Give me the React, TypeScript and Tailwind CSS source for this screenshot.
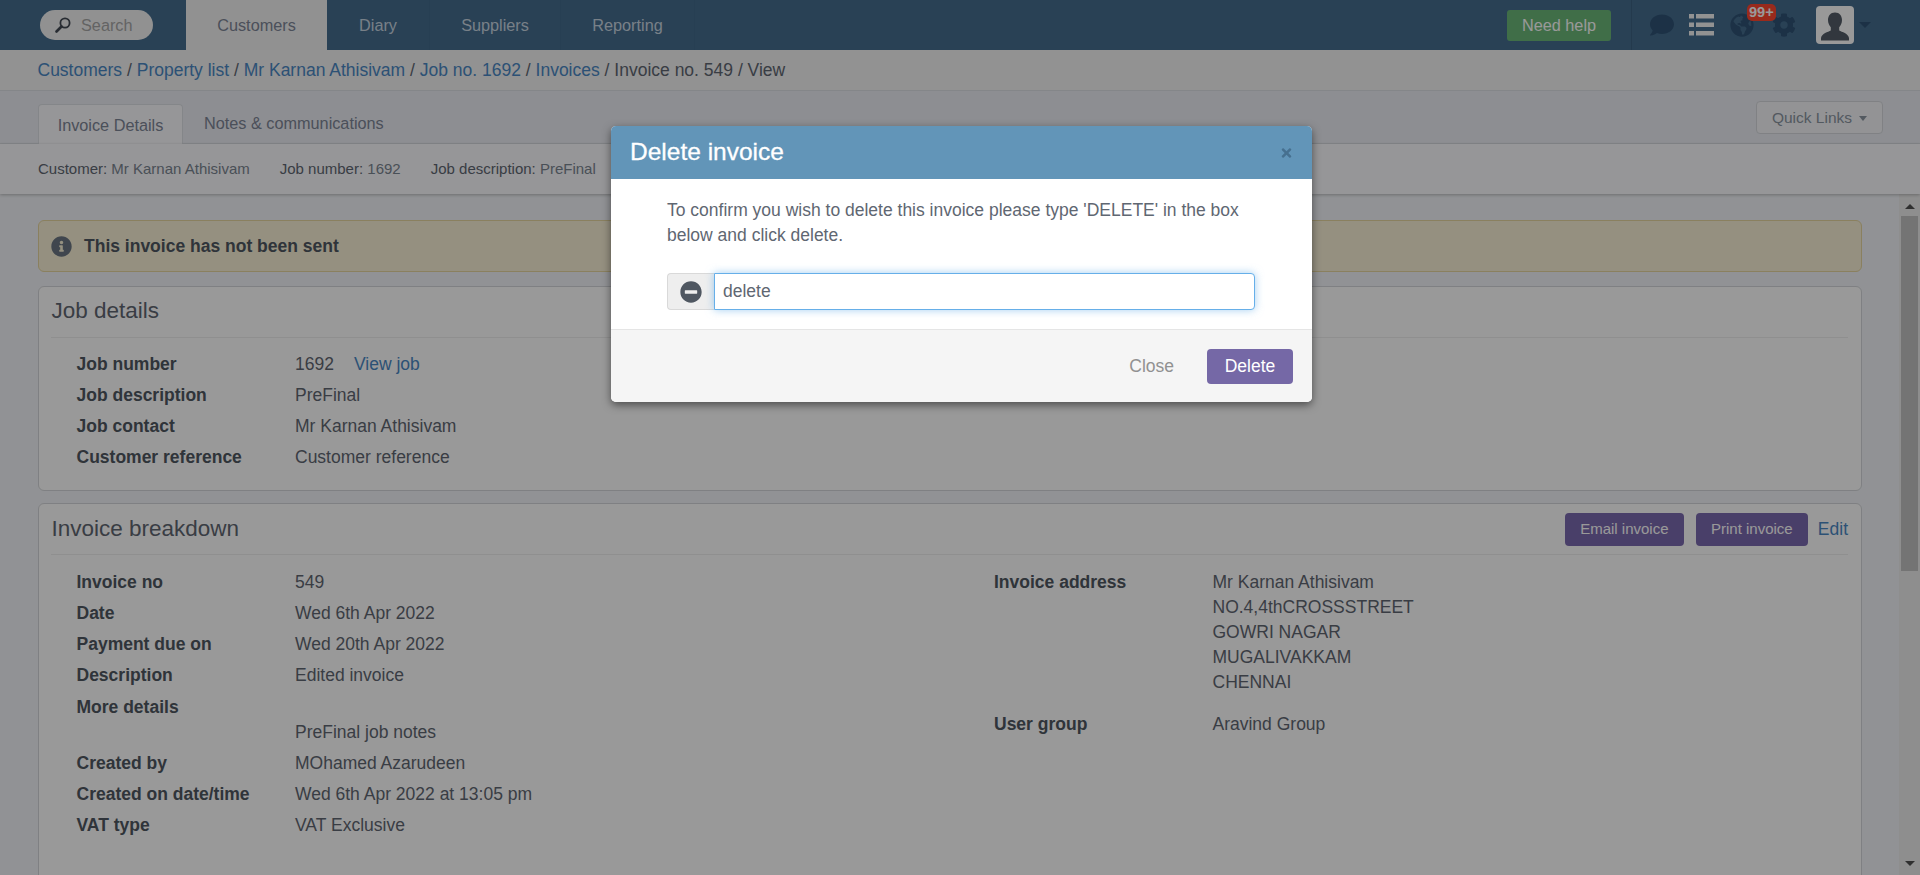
import React from 'react';
import { FaComment, FaGlobeAmericas, FaCog, FaInfoCircle, FaMinusCircle, FaTimes } from 'react-icons/fa';

const Row = ({ label, value, tall }: { label?: string; value?: React.ReactNode; tall?: boolean }) => (
  <div className={`flex leading-[25px] ${tall ? '-mt-[3px] h-[28px]' : 'h-[31px] pt-[3px]'}`}>
    <div className="w-[218.500px] shrink-0 font-bold text-[#4f5761]">{label}</div>
    <div className="text-[#5f6772]">{value}</div>
  </div>
);

const App = () => {
  return (
    <div className="relative h-[875px] w-[1920px] overflow-hidden bg-white text-[17.5px] text-[#5f6772] font-['Liberation_Sans',Arial,sans-serif]">
      {/* Top nav */}
      <header className="flex h-[50px] items-center bg-[#456d8e]">
        <div className="flex w-[186px] shrink-0 pl-[40px]">
          <div className="flex h-[30px] w-[113px] items-center gap-[10px] rounded-full bg-[#f2f2f2] pl-[15px] text-[16.25px] text-[#a6a6a6]">
            <svg viewBox="0 0 16 16" className="h-[16px] w-[16px]" fill="none" stroke="#434a54">
              <circle cx="10" cy="6" r="4.6" strokeWidth="1.800" />
              <path d="M6.500 9.500L1.500 14.500" strokeWidth="2.600" strokeLinecap="round" />
            </svg>
            Search
          </div>
        </div>
        <nav className="flex h-full text-[16.25px]">
          <div className="flex w-[141px] items-center justify-center bg-[#f2f2f2] text-[#7d8596]">Customers</div>
          <div className="flex w-[103px] items-center justify-center border-r border-[#42698a] text-[#c9d6e2]">Diary</div>
          <div className="flex w-[131px] items-center justify-center border-r border-[#42698a] text-[#c9d6e2]">Suppliers</div>
          <div className="flex w-[134px] items-center justify-center border-r border-[#42698a] text-[#c9d6e2]">Reporting</div>
        </nav>
        <div className="ml-auto flex h-full items-center">
          <button className="flex h-[31px] w-[104px] items-center justify-center rounded-[3px] bg-[#6bb878] text-[16.25px] text-white">Need help</button>
          <div className="ml-[20px] h-full border-l border-[#3d6180]" />
          <div className="relative ml-[18px] flex items-center text-[#2f5375]">
            <FaComment className="h-[24px] w-[24px]" />
            <svg viewBox="0 0 25 22" className="ml-[15px] h-[22px] w-[25px]" fill="#f4f4f4">
              <rect x="0" y="0" width="5" height="4.500" />
              <rect x="7" y="0" width="18" height="4.500" />
              <rect x="0" y="8.500" width="5" height="4.500" />
              <rect x="7" y="8.500" width="18" height="4.500" />
              <rect x="0" y="17" width="5" height="4.500" />
              <rect x="7" y="17" width="18" height="4.500" />
            </svg>
            <FaGlobeAmericas className="ml-[16px] h-[24px] w-[24px]" />
            <FaCog className="ml-[18px] h-[24px] w-[24px]" />
            <span className="absolute left-[97px] top-[-9px] rounded-[5px] bg-[#ff4630] px-[2px] text-[14.5px] font-bold leading-[17px] text-white">99+</span>
          </div>
          <div className="ml-[20px] flex h-[38px] w-[38px] items-end justify-center overflow-hidden rounded-[4px] bg-white">
            <svg viewBox="0 0 38 38" className="h-[38px] w-[38px]" fill="#545d68">
              <path d="M19 6.500c-4.600 0-7 3.400-7 7.600 0 3 1.200 5.400 2.800 7.200v3.200c-2.600 1.400-9.300 3-9.800 7.600v2.400h28v-2.400c-.5-4.600-7.200-6.200-9.800-7.600v-3.200c1.600-1.800 2.800-4.200 2.800-7.200 0-4.200-2.400-7.600-7-7.600z" />
            </svg>
          </div>
          <div className="ml-[5px] mr-[49px] h-0 w-0 border-x-[6px] border-t-[6px] border-x-transparent border-t-[#2f5375]" />
        </div>
      </header>

      {/* Breadcrumb */}
      <div className="flex h-[41px] items-center border-b border-[#dcdfe4] bg-[#f3f3f3] pl-[37.500px] text-[#5f6772]">
        <a className="text-[#4a88c4]">Customers</a>&nbsp;/&nbsp;
        <a className="text-[#4a88c4]">Property list</a>&nbsp;/&nbsp;
        <a className="text-[#4a88c4]">Mr Karnan Athisivam</a>&nbsp;/&nbsp;
        <a className="text-[#4a88c4]">Job no. 1692</a>&nbsp;/&nbsp;
        <a className="text-[#4a88c4]">Invoices</a>&nbsp;/ Invoice no. 549 / View
      </div>

      {/* Tabs */}
      <div className="flex h-[53px] items-end justify-between border-b border-[#dcdfe4] bg-[#ebedf3] pl-[38px] pr-[37px]">
        <div className="flex items-end text-[16.25px]">
          <div className="-mb-px flex h-[40px] w-[145px] items-center justify-center rounded-t-[4px] border border-b-0 border-[#dcdfe4] bg-[#fafafd] pt-px text-[#7d8596]">Invoice Details</div>
          <div className="flex h-[40px] items-center pl-[21px] pt-px text-[#7d8596]">Notes &amp; communications</div>
        </div>
        <button className="mb-[9px] flex h-[33px] w-[127px] items-center justify-center gap-[7px] rounded-[4px] border border-[#d5d8dd] bg-[#f5f6f9] pt-px text-[15.500px] text-[#8a94a0]">
          Quick Links
          <span className="h-0 w-0 border-x-[4.500px] border-t-[5px] border-x-transparent border-t-[#8a94a0]" />
        </button>
      </div>

      {/* Sub header */}
      <div className="relative z-10 flex h-[50px] items-center gap-[30px] bg-[#fafafd] pl-[38px] text-[15px] text-[#7b8591] shadow-[0_1px_3px_rgba(0,0,0,0.25)]">
        <span><span className="text-[#5f6772]">Customer:</span> Mr Karnan Athisivam</span>
        <span><span className="text-[#5f6772]">Job number:</span> 1692</span>
        <span><span className="text-[#5f6772]">Job description:</span> PreFinal</span>
      </div>

      {/* Scrolling content */}
      <div className="flex h-[682px] overflow-hidden bg-[#f2f4f8]">
        <main className="w-[1899px] shrink-0 pl-[38px] pr-[37px] pt-[26px]">
          <div className="flex h-[52px] items-center rounded-[6px] border border-[#e6d69e] bg-[#f8f0d5] pl-[12px] font-bold text-[#4f5761]">
            <FaInfoCircle className="mr-[12px] h-[21px] w-[21px] text-[#6b7682]" />
            This invoice has not been sent
          </div>

          <section className="mt-[14px] h-[205px] rounded-[6px] border border-[#d4d6da] bg-white pl-[12px] pr-[13px]">
            <div className="flex h-[51px] items-center border-b border-[#eeeeee] pb-[2px] pl-[0.500px] text-[22.500px] text-[#5f6772]">Job details</div>
            <div className="pl-[25.500px] pt-[11px]">
              <Row label="Job number" value={<>1692<a className="ml-[20px] text-[#4a88c4]">View job</a></>} />
              <Row label="Job description" value="PreFinal" />
              <Row label="Job contact" value="Mr Karnan Athisivam" />
              <Row label="Customer reference" value="Customer reference" />
            </div>
          </section>

          <section className="mt-[12px] h-[400px] rounded-[6px] border border-[#d4d6da] bg-white pl-[12px] pr-[13px]">
            <div className="flex h-[51px] items-center justify-between border-b border-[#eeeeee] pl-[0.500px]">
              <span className="text-[22.500px] text-[#5f6772]">Invoice breakdown</span>
              <div className="flex items-center text-[15px] text-white">
                <button className="flex h-[33px] w-[119px] items-center justify-center rounded-[4px] bg-[#7b69af]">Email invoice</button>
                <button className="ml-[12px] flex h-[33px] w-[112px] items-center justify-center rounded-[4px] bg-[#7b69af]">Print invoice</button>
                <a className="ml-[10px] text-[17.500px] text-[#4a88c4]">Edit</a>
              </div>
            </div>
            <div className="flex pl-[25.500px] pt-[12px]">
              <div className="w-[917.500px] shrink-0">
                <Row label="Invoice no" value="549" />
                <Row label="Date" value="Wed 6th Apr 2022" />
                <Row label="Payment due on" value="Wed 20th Apr 2022" />
                <Row label="Description" value="Edited invoice" />
                <div className="pt-px">
                  <Row label="More details" />
                </div>
                <Row tall value="PreFinal job notes" />
                <Row label="Created by" value="MOhamed Azarudeen" />
                <Row label="Created on date/time" value="Wed 6th Apr 2022 at 13:05 pm" />
                <Row label="VAT type" value="VAT Exclusive" />
              </div>
              <div>
                <div className="flex pt-[3px] leading-[25px]">
                  <div className="w-[218.500px] font-bold text-[#4f5761]">Invoice address</div>
                  <div>
                    <div>Mr Karnan Athisivam</div>
                    <div>NO.4,4thCROSSSTREET</div>
                    <div>GOWRI NAGAR</div>
                    <div>MUGALIVAKKAM</div>
                    <div>CHENNAI</div>
                  </div>
                </div>
                <div className="mt-[17px] flex leading-[25px]">
                  <div className="w-[218.500px] font-bold text-[#4f5761]">User group</div>
                  <div>Aravind Group</div>
                </div>
              </div>
            </div>
          </section>
        </main>

        {/* Scrollbar */}
        <div className="flex w-[21px] flex-col items-center bg-[#ededed]">
          <div className="mt-[10px] h-0 w-0 border-x-[5px] border-b-[5px] border-x-transparent border-b-[#505050]" />
          <div className="mt-[7px] h-[355px] w-[17px] bg-[#c1c1c1]" />
          <div className="mt-auto mb-[10px] h-0 w-0 border-x-[5px] border-t-[5px] border-x-transparent border-t-[#505050]" />
        </div>
      </div>

      {/* Backdrop */}
      <div className="absolute inset-0 z-20 bg-black/40" />

      {/* Delete modal */}
      <div className="absolute left-[611px] top-[126px] z-30 w-[701px] overflow-hidden rounded-[5px] bg-white shadow-[0_3px_9px_rgba(0,0,0,0.5)]">
        <div className="flex h-[53px] items-center justify-between bg-[#6295b8] pl-[19px] pr-[19px]">
          <h3 className="text-[24.500px] font-normal text-white [-webkit-text-stroke:0.3px_white]">Delete invoice</h3>
          <FaTimes className="mt-px h-[14px] w-[13px] text-[#46708f]" />
        </div>
        <div className="h-[151px] border-b border-[#e5e5e5] pl-[56px] pr-[56px] pt-[19px] text-[#5f6772]">
          <p className="leading-[25px]">To confirm you wish to delete this invoice please type 'DELETE' in the box below and click delete.</p>
          <div className="mt-[25px] flex h-[37px] w-[588px]">
            <div className="flex w-[47px] items-center justify-center rounded-l-[4px] border border-r-0 border-[#d9d9d9] bg-[#eeeeee]">
              <FaMinusCircle className="h-[22px] w-[22px] text-[#4f5761]" />
            </div>
            <input
              readOnly
              value="delete"
              className="h-full flex-1 rounded-r-[4px] border border-[#66afe9] bg-white px-[8px] text-[#5f6772] shadow-[0_0_8px_rgba(102,175,233,0.6)] outline-none"
            />
          </div>
        </div>
        <div className="flex h-[72px] items-center justify-end bg-[#f5f5f5] pr-[19px]">
          <span className="text-[#919191]">Close</span>
          <button className="ml-[33px] flex h-[35px] w-[86px] items-center justify-center rounded-[4px] bg-[#7568a6] text-white">Delete</button>
        </div>
      </div>
    </div>
  );
};

export default App;
